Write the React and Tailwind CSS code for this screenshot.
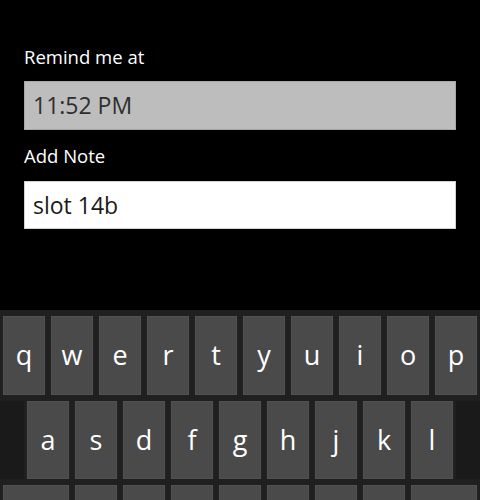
import React from "react";

const Key = ({ label, w = "w-[48px]" }) => (
  <div className={`${w} h-full px-[3px] shrink-0`}>
    <div className="h-full bg-[#4a4a4a] border border-[#525252] flex items-center justify-center text-white text-[27px]">
      {label}
    </div>
  </div>
);

export default function App() {
  const row1 = ["q", "w", "e", "r", "t", "y", "u", "i", "o", "p"];
  const row2 = ["a", "s", "d", "f", "g", "h", "j", "k", "l"];
  const row3 = ["", "", "", "", "", "", ""];
  return (
    <div className="w-[480px] h-[500px] bg-black overflow-hidden flex flex-col font-['Open_Sans',sans-serif]">
      <div className="h-[310px] shrink-0 px-6 pt-[45px] flex flex-col">
        <div className="text-white text-[18.5px] leading-[24px]">Remind me at</div>
        <div className="mt-[12px] h-[49px] bg-[#bdbdbd] border border-[#a6a6a6] flex items-center pl-[8px] text-[#2e2e2e] text-[23px]">
          11:52 PM
        </div>
        <div className="mt-[14px] text-white text-[18.5px] leading-[24px]">Add Note</div>
        <div className="mt-[13px] h-[48px] bg-white border border-[#d0d0d0] flex items-center pl-[8px] text-[#1a1a1a] text-[23px]">
          slot 14b
        </div>
      </div>
      <div className="flex-1 bg-[#202020] pt-[6px] flex flex-col gap-[6px]">
        <div className="flex h-[79px] shrink-0">
          {row1.map((k) => (
            <Key key={k} label={k} />
          ))}
        </div>
        <div className="flex h-[78px] shrink-0">
          <div className="w-[24px] h-full bg-[#1a1a1a] shrink-0" />
          {row2.map((k) => (
            <Key key={k} label={k} />
          ))}
          <div className="w-[24px] h-full bg-[#1a1a1a] shrink-0" />
        </div>
        <div className="flex h-[79px] shrink-0">
          <Key label="" w="w-[72px]" />
          {row3.map((k, i) => (
            <Key key={i} label={k} />
          ))}
          <Key label="" w="w-[72px]" />
        </div>
      </div>
    </div>
  );
}
